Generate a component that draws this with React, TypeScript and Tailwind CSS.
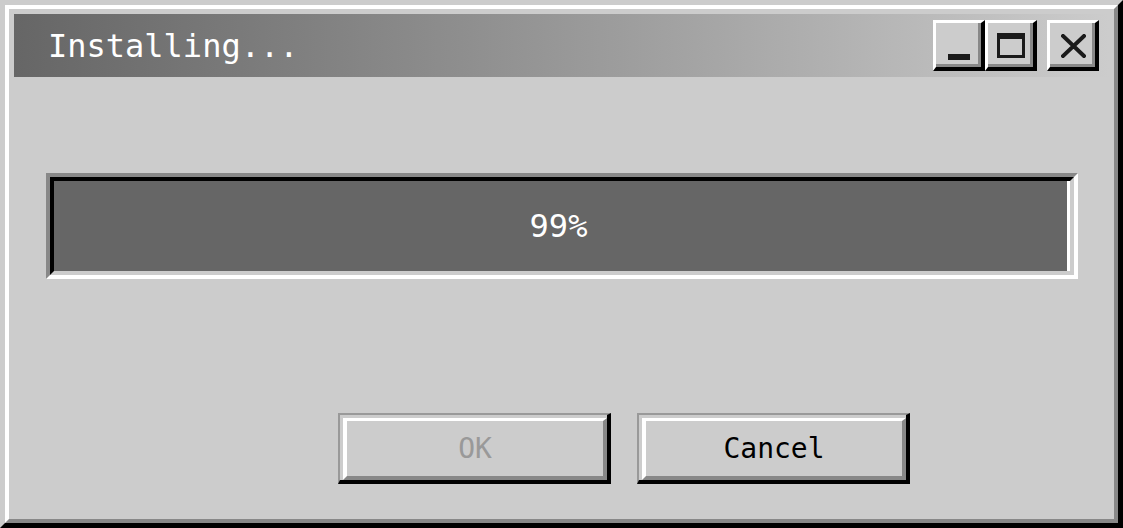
import React from "react";

const mono = { fontFamily: '"DejaVu Sans Mono", "Liberation Mono", monospace' };

function TitleButton({ children, className = "" }: { children: React.ReactNode; className?: string }) {
  return (
    <div className="w-[52px] h-[51px] border-t-[3px] border-l-[3px] border-r-4 border-b-4 border-t-white border-l-white border-r-black border-b-black">
      <div className={`h-full w-full bg-[#cccccc] border-r-[3px] border-b-[3px] border-r-[#888888] border-b-[#888888] flex justify-center pl-1 ${className}`}>
        {children}
      </div>
    </div>
  );
}

function DialogButton({ label, disabled }: { label: string; disabled?: boolean }) {
  return (
    <div className="w-[273px] h-[71px] border-t-2 border-l-2 border-t-[#999999] border-l-[#999999] border-r-4 border-b-4 border-r-black border-b-black pt-[3px] pl-[3px]">
      <div
        className={`h-full w-full border-t-[3px] border-l-4 border-t-white border-l-white border-r-4 border-b-4 border-r-[#888888] border-b-[#888888] flex items-center justify-center text-[28px] ${
          disabled ? "text-[#999999]" : "text-black"
        }`}
        style={mono}
      >
        {label}
      </div>
    </div>
  );
}

export default function App() {
  return (
    <div className="w-[1123px] h-[528px] bg-[#cccccc] border-t-[5px] border-l-[5px] border-r-[5px] border-b-[5px] border-t-[#cccccc] border-l-[#cccccc] border-r-black border-b-black">
      <div className="h-full border-4 border-t-white border-l-white border-r-[#888888] border-b-[#888888] p-[5px] flex flex-col">
        {/* title bar */}
        <div className="h-[63px] bg-gradient-to-r from-[#666666] to-[#cccccc] flex items-center pl-[34px] pr-[10px]">
          <span className="text-white text-[32px] leading-none flex-1" style={mono}>
            Installing...
          </span>
          <div className="flex">
            <TitleButton className="items-end pb-[4px]">
              <div className="w-[22px] h-[6px] bg-[#1a1a1a]" />
            </TitleButton>
            <TitleButton className="items-center pt-1">
              <div className="w-[28px] h-[25px] border-t-[6px] border-x-[3px] border-b-[3px] border-[#1a1a1a]" />
            </TitleButton>
          </div>
          <div className="ml-[10px]">
            <TitleButton className="items-center pt-1">
              <svg width="25" height="24" viewBox="0 0 25 24">
                <path d="M2 2 L23 22 M23 2 L2 22" stroke="#1a1a1a" strokeWidth="4" strokeLinecap="square" fill="none" />
              </svg>
            </TitleButton>
          </div>
        </div>

        {/* progress bar */}
        <div className="mt-[96px] ml-[32px] mr-[31px] h-[106px] border-4 border-t-[#888888] border-l-[#888888] border-r-white border-b-white">
          <div className="h-full border-4 border-t-black border-l-black border-r-[#cccccc] border-b-[#cccccc] flex">
            <div className="flex-1 bg-[#666666] flex items-center justify-center pr-[4px] text-white text-[32px]" style={mono}>
              99%
            </div>
            <div className="w-[3px] bg-white" />
          </div>
        </div>

        {/* buttons */}
        <div className="mt-[134px] pl-[324px] flex gap-[26px]">
          <DialogButton label="OK" disabled />
          <DialogButton label="Cancel" />
        </div>
      </div>
    </div>
  );
}
